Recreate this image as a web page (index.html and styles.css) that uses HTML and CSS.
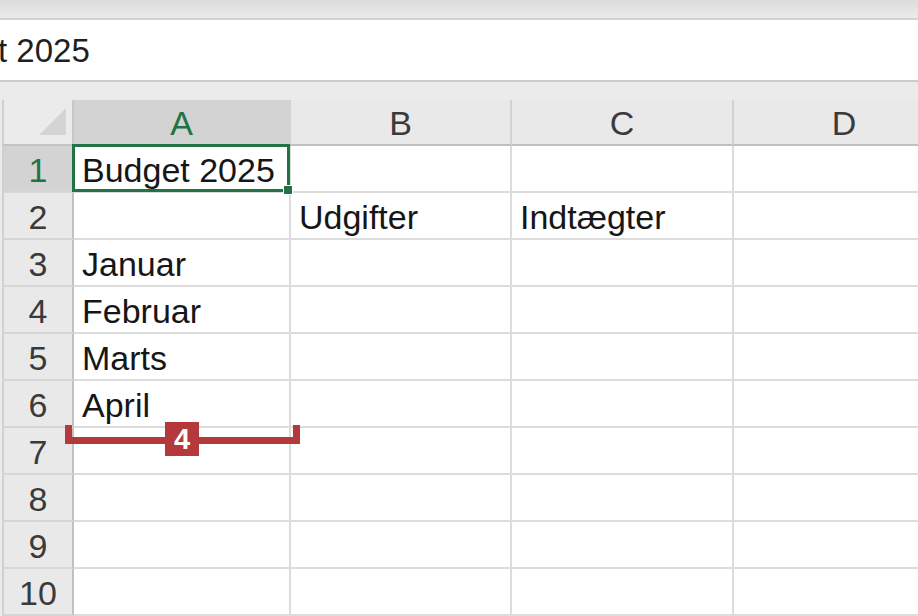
FILE: index.html
```html
<!DOCTYPE html>
<html>
<head>
<meta charset="utf-8">
<link rel="stylesheet" href="styles.css">
</head>
<body>
<div class="app">
  <div class="topbar"></div>
  <div class="formula"><span class="formula-text">t 2025</span></div>
  <div class="gap"></div>
  <div class="sheet">
    <div class="grid">
      <div class="corner"><svg class="tri" width="28" height="28" viewBox="0 0 28 28"><polygon points="27,0 27,27 0,27" fill="#d4d4d4"/></svg></div>
      <div class="colhead sel">A</div>
      <div class="colhead">B</div>
      <div class="colhead">C</div>
      <div class="colhead">D</div>

      <div class="rowhead sel">1</div>
      <div class="cell active">Budget 2025<span class="selbox"></span><span class="handle"></span></div>
      <div class="cell"></div><div class="cell"></div><div class="cell"></div>

      <div class="rowhead">2</div>
      <div class="cell"></div><div class="cell">Udgifter</div><div class="cell">Indtægter</div><div class="cell"></div>

      <div class="rowhead">3</div>
      <div class="cell">Januar</div><div class="cell"></div><div class="cell"></div><div class="cell"></div>

      <div class="rowhead">4</div>
      <div class="cell">Februar</div><div class="cell"></div><div class="cell"></div><div class="cell"></div>

      <div class="rowhead">5</div>
      <div class="cell">Marts</div><div class="cell"></div><div class="cell"></div><div class="cell"></div>

      <div class="rowhead">6</div>
      <div class="cell">April</div><div class="cell"></div><div class="cell"></div><div class="cell"></div>

      <div class="rowhead">7</div>
      <div class="cell"></div><div class="cell"></div><div class="cell"></div><div class="cell"></div>

      <div class="rowhead">8</div>
      <div class="cell"></div><div class="cell"></div><div class="cell"></div><div class="cell"></div>

      <div class="rowhead">9</div>
      <div class="cell"></div><div class="cell"></div><div class="cell"></div><div class="cell"></div>

      <div class="rowhead">10</div>
      <div class="cell"></div><div class="cell"></div><div class="cell"></div><div class="cell"></div>
    </div>
    <div class="annot">
      <div class="bar"></div>
      <div class="cap cap-l"></div>
      <div class="cap cap-r"></div>
      <div class="badge">4</div>
    </div>
  </div>
</div>
</body>
</html>
```
FILE: styles.css
```css
html, body {
  margin: 0;
  padding: 0;
  width: 918px;
  height: 616px;
  overflow: hidden;
  background: #ffffff;
  font-family: "Liberation Sans", Arial, sans-serif;
}

.app {
  width: 918px;
  height: 616px;
  overflow: hidden;
  display: flex;
  flex-direction: column;
}

.topbar {
  height: 18px;
  flex: none;
  background: linear-gradient(#dcdcdc, #ebebeb);
  border-bottom: 2px solid #d2d2d2;
}

.formula {
  height: 60px;
  flex: none;
  background: #ffffff;
  border-bottom: 2px solid #cbcbcb;
  display: flex;
  align-items: center;
  overflow: hidden;
}

.formula-text {
  font-size: 33px;
  color: #1f1f1f;
  margin-left: -2px;
  margin-top: 2px;
}

.gap {
  height: 18px;
  flex: none;
  background: #ebebeb;
}

.sheet {
  position: relative;
  flex: 1;
  background: #ebebeb;
  overflow: hidden;
}

.grid {
  display: grid;
  grid-template-columns: 74px 217px 221px 222px 222px;
  grid-template-rows: 46px repeat(10, 47px);
  width: 956px;
}

.corner {
  background: #ebebeb;
  border-left: 2px solid #d0d0d0;
  margin-left: 2px;
  border-right: 2px solid #c8c8c8;
  border-bottom: 2px solid #c4c4c4;
  box-sizing: border-box;
  display: flex;
  justify-content: flex-end;
  align-items: flex-end;
  padding: 0 5px 8px 0;
}

.tri { display: block; }

.colhead {
  background: #e9e9e9;
  border-right: 2px solid #d2d2d2;
  border-bottom: 2px solid #c0c0c0;
  box-sizing: border-box;
  font-size: 34px;
  color: #3a3a3a;
  text-align: center;
  line-height: 46px;
}

.colhead.sel {
  background: #d3d3d3;
  color: #217346;
  border-bottom-color: #217346;
}

.rowhead {
  background: #e9e9e9;
  border-left: 2px solid #d0d0d0;
  margin-left: 2px;
  border-right: 2px solid #c0c0c0;
  border-bottom: 2px solid #d6d6d6;
  box-sizing: border-box;
  font-size: 34px;
  color: #3a3a3a;
  text-align: center;
  line-height: 48px;
}

.rowhead.sel {
  background: #d3d3d3;
  color: #217346;
}

.cell {
  background: #ffffff;
  border-right: 2px solid #dcdcdc;
  border-bottom: 2px solid #dcdcdc;
  box-sizing: border-box;
  font-size: 34px;
  color: #161616;
  line-height: 48px;
  padding-left: 8px;
  white-space: nowrap;
}

.cell.active {
  position: relative;
}

.selbox {
  position: absolute;
  left: -2px;
  top: -2px;
  right: -1px;
  bottom: -1px;
  border: 3px solid #217346;
  box-sizing: border-box;
}

.handle {
  position: absolute;
  right: -4px;
  bottom: -4px;
  width: 8px;
  height: 8px;
  background: #217346;
  border: 1px solid #ffffff;
}

.annot {
  position: absolute;
  left: 65px;
  top: 322px;
  width: 235px;
  height: 35px;
}

.bar {
  position: absolute;
  left: 0;
  right: 0;
  top: 15px;
  height: 7px;
  background: #b5383a;
}

.cap {
  position: absolute;
  top: 3px;
  width: 7px;
  height: 19px;
  background: #b5383a;
}

.cap-l { left: 0; }
.cap-r { right: 0; }

.badge {
  position: absolute;
  left: 100px;
  top: 0;
  width: 34px;
  height: 34px;
  background: #b5383a;
  color: #ffffff;
  font-weight: bold;
  font-size: 29px;
  line-height: 35px;
  text-align: center;
}
```
